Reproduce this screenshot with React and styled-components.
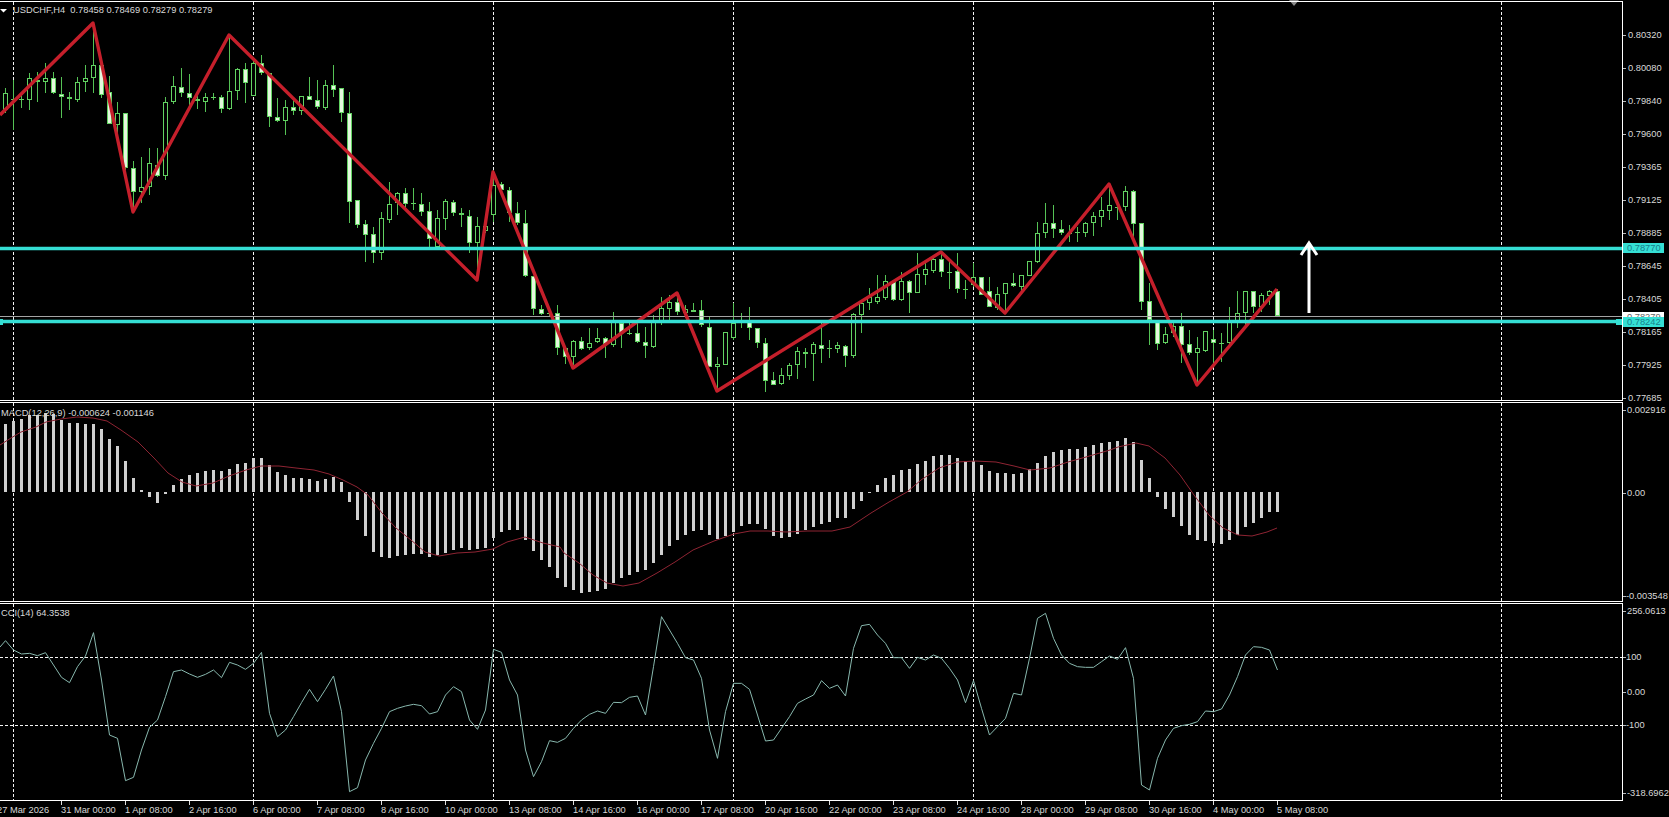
import styled, { createGlobalStyle } from "styled-components"

// bars are 8px apart, bar i sits on x = 5 + 8i
const barX = i => 5 + 8 * i

// [wick top, wick bottom, body top, body bottom, bear] in page pixels
const candles = [
  [88,113,93,110,0],[80,130,99,100,0],[93,108,99,100,0],[73,110,78,100,0],[72,102,80,82,1],
  [63,93,78,82,0],[72,94,78,93,1],[77,118,94,97,1],[92,110,97,99,1],[77,102,82,100,0],
  [65,92,78,82,0],[23,93,65,78,0],[60,98,65,95,1],[76,124,92,124,1],[102,137,113,125,0],
  [113,170,113,168,1],[161,213,168,192,1],[157,203,187,192,0],[148,195,163,187,0],[148,177,165,176,1],
  [97,180,102,176,0],[76,104,86,102,0],[68,97,87,93,1],[74,107,93,98,1],[93,109,99,101,1],
  [93,112,97,102,0],[93,100,97,98,0],[95,113,97,109,1],[35,110,91,109,0],[68,100,69,91,0],
  [63,103,69,83,1],[57,96,63,96,0],[55,75,63,73,1],[73,127,73,117,1],[98,122,117,121,1],
  [100,135,107,121,0],[100,115,107,111,1],[96,115,96,111,0],[77,100,96,100,1],[80,109,100,107,1],
  [80,110,85,108,0],[65,97,85,90,1],[88,122,88,113,1],[92,223,113,202,1],[200,228,200,225,1],
  [220,262,224,235,1],[227,263,234,253,1],[212,260,218,253,0],[182,223,204,220,0],[192,215,193,203,0],
  [188,210,193,204,1],[188,210,203,204,1],[193,216,204,212,1],[202,247,211,239,1],[210,247,218,247,0],
  [199,230,201,219,0],[200,216,202,213,1],[208,227,213,215,1],[210,253,216,243,1],[217,280,226,243,0],
  [225,233,226,231,0],[170,222,185,215,0],[182,192,184,190,1],[187,222,190,213,1],[202,225,213,223,1],
  [210,277,223,276,1],[276,315,276,309,1],[305,315,309,314,1],[310,316,313,314,1],[305,355,313,348,1],
  [348,364,348,357,1],[340,365,341,357,0],[337,350,341,349,1],[328,350,343,348,0],[328,343,338,342,0],
  [337,358,338,344,1],[312,347,322,345,0],[322,348,323,333,1],[322,335,333,334,0],[322,343,333,342,1],
  [327,358,342,346,1],[315,348,322,347,0],[297,325,308,323,0],[295,320,302,309,0],[297,315,302,312,1],
  [305,318,309,313,0],[303,312,310,312,1],[300,327,310,325,1],[317,367,327,367,1],[357,390,364,367,0],
  [332,365,332,365,0],[303,340,323,338,0],[313,328,322,323,0],[307,340,322,328,1],[328,348,328,343,1],
  [338,392,343,381,1],[372,385,380,385,1],[368,385,375,384,0],[363,380,365,376,0],[347,379,351,365,0],
  [348,368,352,354,1],[342,381,344,354,0],[323,363,345,349,1],[340,358,348,349,0],[342,353,345,349,0],
  [345,367,346,356,1],[313,358,314,356,0],[300,333,303,315,0],[288,310,297,303,0],[275,304,297,302,0],
  [275,300,281,298,0],[282,301,282,300,1],[272,301,281,300,0],[280,313,281,293,1],[253,293,274,293,0],
  [263,285,269,275,0],[258,273,259,271,0],[252,277,259,272,1],[262,289,272,273,0],[253,293,271,289,1],
  [280,299,289,290,0],[263,287,277,285,0],[277,295,277,295,1],[277,307,291,307,1],[287,310,294,308,0],
  [283,313,283,294,0],[273,287,283,286,1],[275,292,275,287,0],[261,276,261,276,0],[222,263,233,262,0],
  [203,238,223,233,0],[205,238,223,229,1],[220,235,229,233,1],[225,242,233,234,0],[227,242,232,233,0],
  [222,237,223,233,0],[212,236,216,223,0],[197,227,210,217,0],[185,220,205,211,0],[205,220,207,208,0],
  [186,211,191,207,0],[190,237,191,224,1],[223,310,223,302,1],[283,345,301,320,1],[320,350,320,344,1],
  [327,344,334,343,0],[320,337,326,333,0],[313,363,326,345,1],[330,355,344,353,1],[337,383,348,353,0],
  [331,352,331,351,0],[330,367,339,343,1],[333,362,343,344,0],[307,345,321,343,0],[291,328,313,321,0],
  [291,327,291,313,0],[291,313,291,307,1],[293,312,295,307,0],[290,305,291,296,0],[289,316,291,316,1],
]

// MACD bar tip per bar, the zero line is at y = 491.7
const macdTips = [
  72,63,57,45,45,40,42,60,68,68,72,72,87,117,138,183,234,271,290,308,
  283,255,238,225,218,213,210,213,207,193,188,175,175,195,216,225,233,235,238,243,
  237,232,247,305,360,408,455,472,473,468,465,462,462,472,465,458,450,445,450,447,
  445,415,397,390,390,420,453,480,500,535,560,570,578,575,573,568,548,535,525,517,
  510,490,465,437,420,405,393,390,405,417,408,395,378,373,373,387,407,413,410,402,
  390,380,372,365,355,355,327,303,277,255,235,225,210,207,193,183,167,165,165,175,
  183,183,195,213,218,218,222,218,208,190,168,155,150,147,147,140,135,128,125,122,
  115,125,180,233,290,327,352,378,405,420,423,430,432,420,405,382,370,353,335,335,
].map(v => 400 + v / 3)

const signalLine = [
  [0,445],[11,438],[21,432],[36,427],[46,422],[61,419],[77,417],[93,418],[107,421],[121,430],[138,442],[154,458],
  [168,473],[182,482],[196,486],[213,483],[229,476],[246,470],[261,466],[279,466],[296,468],[314,470],[329,474],
  [343,480],[357,487],[368,495],[382,513],[396,528],[411,540],[425,552],[439,556],[457,553],[475,552],[493,549],
  [507,542],[525,537],[543,543],[560,547],[564,553],[579,563],[593,575],[607,583],[623,586],[639,583],[657,573],
  [675,562],[693,550],[714,541],[734,534],[750,531],[768,531],[786,532],[807,531],[832,531],[850,527],[871,513],
  [889,502],[907,492],[921,480],[939,468],[957,462],[975,461],[996,462],[1014,466],[1030,470],[1050,468],[1068,462],
  [1086,457],[1110,450],[1118,447],[1136,443],[1149,446],[1165,458],[1180,475],[1194,495],[1209,515],[1223,528],
  [1238,535],[1252,536],[1267,532],[1277,528],
]

// CCI value per bar
const cciLine = [
  722,750,762,760,767,758,795,832,848,800,768,698,840,1005,1015,1142,1132,1050,982,960,
  890,815,810,822,832,823,810,833,787,795,808,790,757,940,1010,990,950,908,868,905,
  868,828,935,1175,1163,1080,1030,985,935,925,918,913,917,942,935,885,860,875,960,988,
  930,748,757,840,885,1050,1130,1085,1022,1027,1015,985,960,943,933,940,907,908,892,888,
  945,800,650,690,730,773,780,835,990,1075,935,850,850,868,945,1023,1020,985,950,910,
  897,885,842,865,855,888,745,677,673,705,730,773,773,805,772,780,765,775,805,840,
  908,842,925,1005,980,955,880,885,775,655,640,715,765,790,800,802,802,785,768,778,
  743,835,1155,1170,1075,1020,985,977,973,965,933,935,927,885,830,765,740,742,750,810,
].map((v, i) => [barX(i) + 0.5, 400 + v / 3])

const zigzag = [
  [0,115],[93,23],[133,212],[229,35],[477,280],[493,172],[573,368],[677,293],
  [717,391],[941,252],[1005,313],[1109,184],[1197,385],[1277,289],
]

const gridX = [13.5, 253.5, 493.5, 733.5, 973.5, 1213.5, 1501.5]

const prices = [
  "0.80320","0.80080","0.79840","0.79600","0.79365","0.79125",
  "0.78885","0.78645","0.78405","0.78165","0.77925","0.77685",
]
const dates = [
  "27 Mar 2026","31 Mar 00:00","1 Apr 08:00","2 Apr 16:00","6 Apr 00:00","7 Apr 08:00","8 Apr 16:00",
  "10 Apr 00:00","13 Apr 08:00","14 Apr 16:00","16 Apr 00:00","17 Apr 08:00","20 Apr 16:00","22 Apr 00:00",
  "23 Apr 08:00","24 Apr 16:00","28 Apr 00:00","29 Apr 08:00","30 Apr 16:00","4 May 00:00","5 May 08:00",
]

const toPoints = list => list.map(p => p.join(",")).join(" ")

const Global = createGlobalStyle`
html,body{margin:0;padding:0;background:#000;}
`
const Terminal = styled.div`
position:relative;
width:1669px;height:817px;overflow:hidden;
padding-top:1px;box-sizing:border-box;
display:flex;flex-direction:column;gap:1px;
background:#000;color:#d8d8d8;
font-family:"Liberation Sans",Arial,sans-serif;font-size:9.3px;line-height:10px;
`
const Pane = styled.section`
display:flex;flex:none;
height:${p=>p.$height}px;min-height:0;
`
const Plot = styled.div`
position:relative;
flex:0 0 1622px;box-sizing:border-box;
border-top:1px solid #fff;border-bottom:1px solid #fff;
`
const Canvas = styled.svg`
display:block;width:100%;height:100%;
`
const Axis = styled.div`
position:relative;flex:1;
border-left:1px solid #fff;
`
const Scale = styled.div`
display:grid;
grid-template-rows:${p=>p.$rows};
padding-top:${p=>p.$pad}px;
`
const Legend = styled.span`
position:absolute;left:${p=>p.$left}px;top:${p=>p.$top}px;
white-space:pre;
`
const AxisMark = styled.span`
position:relative;
padding-left:${p=>p.$indent||4}px;
white-space:nowrap;
&::before{
content:"";position:absolute;left:0;top:5px;
width:3px;height:1px;background:#bbb;
}
`
const PriceTag = styled.span`
position:absolute;left:0;top:${p=>p.$y}px;
width:41px;height:10px;padding-left:4px;box-sizing:border-box;
background:${p=>p.$bid?"#fff":"#35dfd4"};
color:${p=>p.$bid?"#666":"#17808c"};
`
const TimeAxis = styled.div`
display:flex;flex:none;height:16px;margin-left:-3px;margin-top:-1px;
`
const TimeCell = styled.div`
position:relative;flex:0 0 64px;
padding-top:4px;white-space:nowrap;
&::before{
content:"";position:absolute;left:0;top:0;
width:1px;height:4px;background:#ddd;
}
`
const ShiftMark = styled.i`
position:absolute;left:1289px;top:0;
border-left:5px solid transparent;border-right:5px solid transparent;
border-top:6px solid #8a8a8a;
`
const DashLine = styled.line`
stroke:#f4f4f4;stroke-width:1;stroke-dasharray:3 2;shape-rendering:crispEdges;
`
const Wick = styled.line`
stroke:#55c255;stroke-width:1;shape-rendering:crispEdges;
`
const Body = styled.rect`
fill:${p=>p.$bear?"#e4f8de":"#000"};
stroke:#62d262;stroke-width:1;shape-rendering:crispEdges;
`
const HLine = styled.line`
stroke:${p=>p.$color};stroke-width:${p=>p.$w}px;
`
const Anchor = styled.rect`
fill:#35dfd4;
`
const Zigzag = styled.polyline`
fill:none;stroke:#c51f2b;stroke-width:3.4;stroke-linejoin:round;
`
const ArrowUp = styled.path`
fill:none;stroke:#fff;stroke-width:3;
`
const Pointer = styled.polygon`
fill:#fff;
`
const HistBar = styled.rect`
fill:#cfcfcf;shape-rendering:crispEdges;
`
const SignalPath = styled.polyline`
fill:none;stroke:#8f2433;stroke-width:1;
`
const CciPath = styled.polyline`
fill:none;stroke:#88b8ae;stroke-width:1;
`

function Grid({top,height}){
    return gridX.map(x=><DashLine key={x} x1={x} x2={x} y1={top} y2={top+height}/>)
}

function Candle({data,x}){
    const [hi,lo,top,bot,bear]=data
    const cx=x+0.5
    return(
    <g>
        <Wick x1={cx} x2={cx} y1={hi} y2={lo}/>
        <Body x={x-1.5} y={top+0.5} width={4} height={Math.max(bot-top-1,0.01)} $bear={bear}/>
    </g>
    )
}

function MainPane(){
    return(
    <Pane $height={400}>
        <Plot>
            <Canvas viewBox="0 2 1622 398">
                <Grid top={2} height={398}/>
                {candles.map((c,i)=><Candle key={i} data={c} x={barX(i)}/>)}
                <HLine x1={0} x2={1622} y1={316.5} y2={316.5} $color="#a4a4a4" $w={1}/>
                <Zigzag points={toPoints(zigzag)}/>
                <HLine x1={0} x2={1622} y1={248.5} y2={248.5} $color="#35dfd4" $w={3.4}/>
                <HLine x1={0} x2={1622} y1={321.5} y2={321.5} $color="#35dfd4" $w={3.4}/>
                <Anchor x={0} y={319} width={3} height={6}/>
                <Anchor x={1616} y={319} width={6} height={6}/>
                <ArrowUp d="M1309 313V244M1301 255L1309 243L1317 255"/>
                <Pointer points="0,9 7,9 3.5,12.5"/>
            </Canvas>
            <Legend $left={13} $top={3}>USDCHF,H4  0.78458 0.78469 0.78279 0.78279</Legend>
        </Plot>
        <Axis>
            <Scale $pad={29} $rows="repeat(12,33px)">
                {prices.map(t=><AxisMark key={t} $indent={5}>{t}</AxisMark>)}
            </Scale>
            <PriceTag $y={242}>0.78770</PriceTag>
            <PriceTag $y={311} $bid>0.78279</PriceTag>
            <PriceTag $y={316}>0.78242</PriceTag>
        </Axis>
    </Pane>
    )
}

function MacdPane(){
    return(
    <Pane $height={200}>
        <Plot>
            <Canvas viewBox="0 403 1622 198">
                <Grid top={403} height={198}/>
                {macdTips.map((y,i)=>{
                    const h=Math.abs(y-491.7)
                    return <HistBar key={i} x={barX(i)-1} y={Math.min(y,491.7)} width={3} height={Math.max(h,1)}/>
                })}
                <SignalPath points={toPoints(signalLine)}/>
            </Canvas>
            <Legend $left={1} $top={5}>MACD(12,26,9) -0.000624 -0.001146</Legend>
        </Plot>
        <Axis>
            <Scale $pad={3} $rows="83px 103px 10px">
                <AxisMark>0.002916</AxisMark>
                <AxisMark>0.00</AxisMark>
                <AxisMark $indent={3}>-0.003548</AxisMark>
            </Scale>
        </Axis>
    </Pane>
    )
}

function CciPane(){
    return(
    <Pane $height={198}>
        <Plot>
            <Canvas viewBox="0 604 1622 196">
                <Grid top={604} height={196}/>
                <DashLine x1={0} x2={1622} y1={657.5} y2={657.5}/>
                <DashLine x1={0} x2={1622} y1={725.5} y2={725.5}/>
                <CciPath points={toPoints([[0,647],...cciLine])}/>
            </Canvas>
            <Legend $left={1} $top={4}>CCI(14) 64.3538</Legend>
        </Plot>
        <Axis>
            <Scale $pad={3} $rows="46px 35px 33px 68px 10px">
                <AxisMark>256.0613</AxisMark>
                <AxisMark $indent={3}>100</AxisMark>
                <AxisMark>0.00</AxisMark>
                <AxisMark $indent={3}>-100</AxisMark>
                <AxisMark>-318.6962</AxisMark>
            </Scale>
        </Axis>
    </Pane>
    )
}

export default function App(){
    return(
    <Terminal>
        <Global/>
        <ShiftMark/>
        <MainPane/>
        <MacdPane/>
        <CciPane/>
        <TimeAxis>
            {dates.map(d=><TimeCell key={d}>{d}</TimeCell>)}
        </TimeAxis>
    </Terminal>
    )
}
